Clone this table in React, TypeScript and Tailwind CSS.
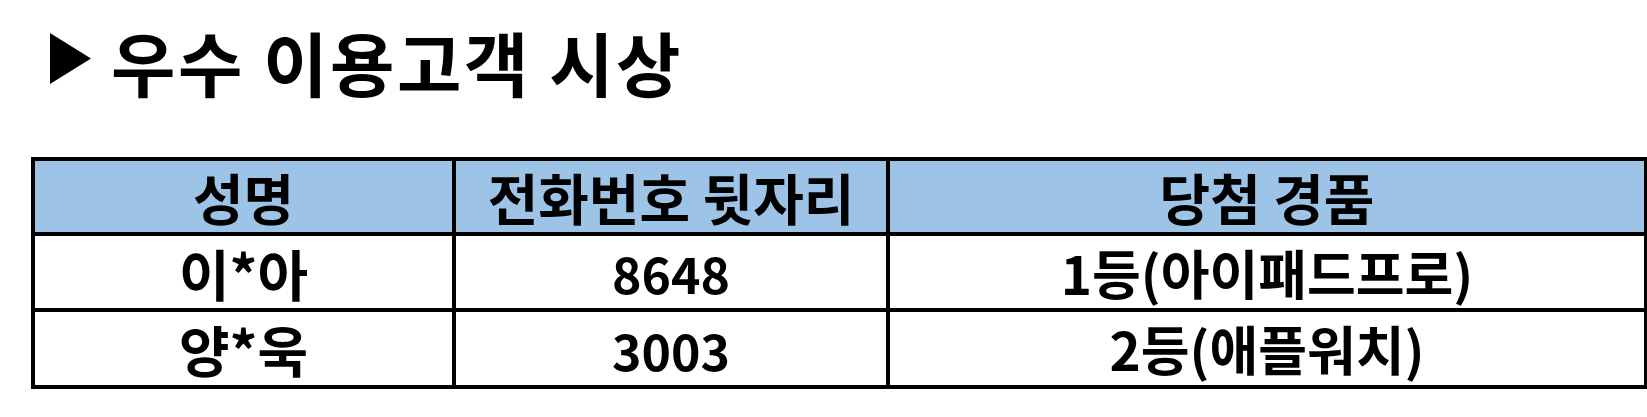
const rows = [
  { name: '이*아', phone: '8648', prize: '1등(아이패드프로)' },
  { name: '양*욱', phone: '3003', prize: '2등(애플워치)' },
];

export default function App() {
  return (
    <div className="h-[417px] w-[1647px] bg-white text-black font-['Noto_Sans_CJK_KR',sans-serif]">
      <div className="flex items-start pl-[50px] pt-[33px] h-[108px]">
        <svg width="41" height="51" viewBox="0 0 41 51" className="shrink-0">
          <polygon points="0,0 41,25.5 0,51" fill="#000" />
        </svg>
        <h1 className="ml-[20px] -mt-[6px] text-[70px] leading-none font-bold tracking-[2.5px]">우수 이용고객 시상</h1>
      </div>

      <table className="ml-[31px] mt-[49px] w-[1613px] table-fixed border-collapse border-4 border-black">
        <colgroup>
          <col className="w-[421px]" />
          <col className="w-[434px]" />
          <col className="w-[758px]" />
        </colgroup>
        <thead>
          <tr className="h-[75px] bg-[#9dc3e6]">
            <th className="border-4 border-black p-0 text-[55px] font-bold leading-none">성명</th>
            <th className="border-4 border-black p-0 text-[55px] font-bold leading-none whitespace-nowrap">전화번호 뒷자리</th>
            <th className="border-4 border-black p-0 text-[55px] font-bold leading-none">당첨 경품</th>
          </tr>
        </thead>
        <tbody>
          {rows.map((r, i) => (
            <tr key={r.name} className={i === 0 ? 'h-[76px]' : 'h-[77px]'}>
              <td className="border-4 border-black p-0 text-center text-[55px] font-bold leading-none">{r.name}</td>
              <td className="border-4 border-black p-0 text-center text-[50px] font-bold leading-none">{r.phone}</td>
              <td className="border-4 border-black p-0 text-center text-[53px] font-bold leading-none whitespace-nowrap">{r.prize}</td>
            </tr>
          ))}
        </tbody>
      </table>
    </div>
  );
}
